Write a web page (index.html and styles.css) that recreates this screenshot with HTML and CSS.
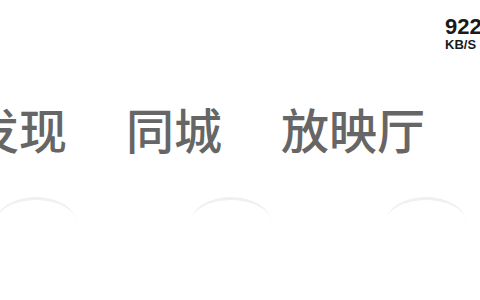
FILE: index.html
```html
<!DOCTYPE html>
<html lang="zh">
<head>
<meta charset="utf-8">
<link rel="stylesheet" href="styles.css">
</head>
<body>
<div class="page">
  <div class="status">
    <div class="speed">
      <div class="speed-num">922</div>
      <div class="speed-unit">KB/S</div>
    </div>
  </div>
  <div class="tabs">
    <span class="tab">发现</span>
    <span class="tab">同城</span>
    <span class="tab">放映厅</span>
  </div>
  <div class="arcs">
    <div class="arc"></div>
    <div class="arc"></div>
    <div class="arc"></div>
  </div>
</div>
</body>
</html>
```

FILE: styles.css
```css
html, body {
  margin: 0;
  padding: 0;
  background: #ffffff;
}
body {
  width: 480px;
  height: 300px;
  overflow: hidden;
}
.page {
  width: 480px;
  height: 300px;
  overflow: hidden;
  display: flex;
  flex-direction: column;
}
.status {
  display: flex;
  padding-top: 16px;
  padding-left: 445px;
  height: 50px;
  box-sizing: border-box;
}
.speed {
  display: flex;
  flex-direction: column;
  gap: 1px;
  font-family: "Liberation Sans", Arial, sans-serif;
  font-weight: bold;
  color: #1a1a1a;
  white-space: nowrap;
}
.speed-num {
  font-size: 22px;
  line-height: 22px;
}
.speed-unit {
  font-size: 13px;
  line-height: 12px;
}
.tabs {
  display: flex;
  gap: 59px;
  margin-top: 54px;
  margin-left: -29px;
  white-space: nowrap;
}
.tab {
  flex: none;
  font-family: "Noto Sans CJK SC", "Noto Sans", sans-serif;
  font-size: 48px;
  line-height: 48px;
  font-weight: 500;
  color: #666666;
}
.arcs {
  display: flex;
  gap: 115px;
  margin-top: 45px;
  margin-left: -4px;
}
.arc {
  flex: none;
  width: 80px;
  height: 50px;
  box-sizing: border-box;
  border-top: 3px solid #f0f0f0;
  border-radius: 50%;
}
```
